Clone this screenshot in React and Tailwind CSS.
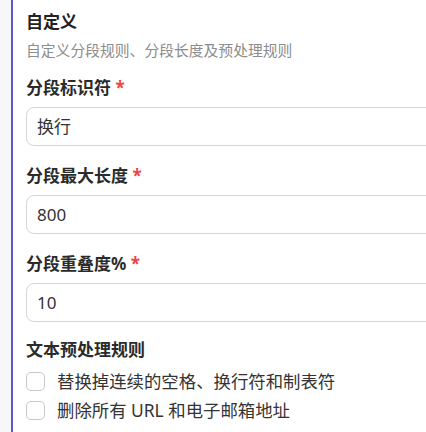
const fields = [
  { label: '分段标识符', value: '换行' },
  { label: '分段最大长度', value: '800' },
  { label: '分段重叠度%', value: '10' },
]

const rules = ['替换掉连续的空格、换行符和制表符', '删除所有 URL 和电子邮箱地址']

function Field({ label, value }) {
  return (
    <div className="mb-[18px]">
      <div className="h-[24px] leading-[24px] text-[17px] font-bold text-[#2b2b2b]">
        {label} <span className="text-[#ef4444]">*</span>
      </div>
      <div className="mt-[7px] h-[39px] w-[440px] rounded-[8px] border border-[#d6d6d6] bg-white flex items-center px-[10px] text-[17px] text-[#333]">
        {value}
      </div>
    </div>
  )
}

export default function App() {
  return (
    <div
      className="flex h-[432px] w-[426px] overflow-hidden bg-white"
      style={{ fontFamily: '"Noto Sans", "Noto Sans CJK SC", sans-serif' }}
    >
      <div className="w-[11px] shrink-0 bg-[#f7f7f9]" />
      <div className="w-[2px] shrink-0 bg-[#5b57d1]" />
      <div className="flex-1 pl-[13px] pt-[10px]">
        <div className="h-[24px] leading-[24px] text-[17px] font-bold text-[#222]">自定义</div>
        <div className="mt-[6px] h-[20px] leading-[20px] text-[14.8px] text-[#8c8c8c]">
          自定义分段规则、分段长度及预处理规则
        </div>

        <div className="mt-[16px]">
          {fields.map((f) => (
            <Field key={f.label} {...f} />
          ))}
        </div>

        <div className="-mt-[2px] h-[24px] leading-[24px] text-[17px] font-bold text-[#2b2b2b]">文本预处理规则</div>
        <div className="mt-[5px]">
          {rules.map((r) => (
            <label key={r} className="flex h-[29px] items-center gap-[12px]">
              <span className="h-[19px] w-[19px] shrink-0 rounded-[5px] border border-[#c9c9c9] bg-white" />
              <span className="text-[17.4px] text-[#333]">{r}</span>
            </label>
          ))}
        </div>
      </div>
    </div>
  )
}
